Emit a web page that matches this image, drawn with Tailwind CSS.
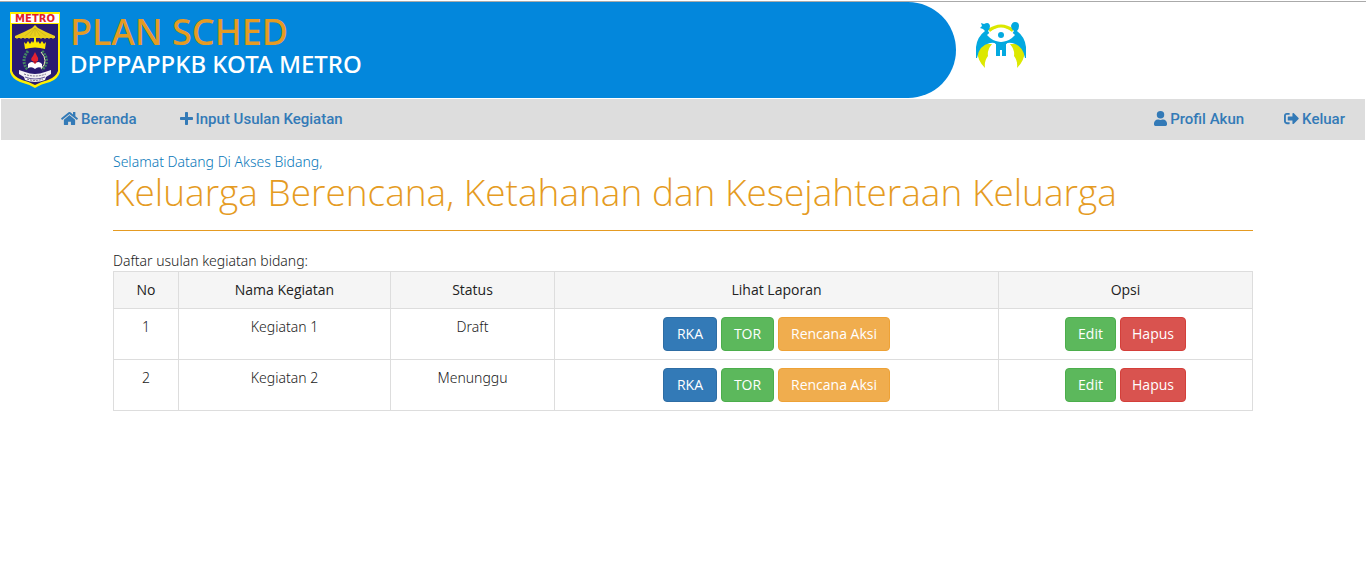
<!DOCTYPE html>
<html lang="id">
<head>
<meta charset="utf-8">
<meta name="viewport" content="width=device-width, initial-scale=1">
<title>Plan Sched - DPPPAPPKB Kota Metro</title>
<script src="https://cdn.jsdelivr.net/npm/@tailwindcss/browser@4"></script>
</head>
<body class="bg-white font-['Noto_Sans',sans-serif] text-sm leading-5 font-light text-[#222] pt-px">
<header class="flex border-t border-[#aaaaaa]">
  <div class="flex h-24 w-[70%] gap-2 rounded-r-[48px] bg-[#0387dc] pl-2">
    <svg class="mt-2 h-[80px] w-[54px] shrink-0" viewBox="0 0 54 80" role="img" aria-label="Lambang Kota Metro">
      <path d="M2 2H52V62Q50 69 42 72Q33 74 27 78Q20 74 12 72Q4 69 2 62Z" fill="#fff000"/>
      <path d="M4 14H50V61Q48 67 40 70Q32 72 27 75Q22 72 14 70Q6 67 4 61Z" fill="#291b70"/>
      <path d="M3 4H51V13H3Z" fill="#fff"/>
      <text x="27" y="12" text-anchor="middle" font-family="DejaVu Sans" font-size="10" font-weight="bold" fill="#e3202b">METRO</text>
      <path d="M27 15L30 18L38 22L47 26V28H7V26L16 22L24 18Z" fill="#e9cf1c"/>
      <path d="M27 18L17 26M27 18L22 26M27 18V26M27 18L32 26M27 18L38 26" stroke="#b59a20" stroke-width=".4"/>
      <path d="M9 27V29M13 27V29M17 27V29M21 27V29M33 27V29M37 27V29M41 27V29M45 27V29" stroke="#e9cf1c"/>
      <path d="M26 27H28V35H26Z" fill="#fff000"/>
      <path d="M16 32L18 34L20 31L22 34L24 31L25 33L27 29L29 33L30 31L32 34L34 31L36 34L38 32L37 39Q27 36 17 39Z" fill="#ffe900"/>
      <path d="M20 41Q12 51 20 60" fill="none" stroke="#438463" stroke-width="3" stroke-dasharray="2 1"/>
      <path d="M34 41Q43 51 34 60" fill="none" stroke="#438463" stroke-width="3" stroke-dasharray="2 1"/>
      <path d="M33 42Q41 51 33 59" fill="none" stroke="#e9dfb8"/>
      <path d="M27 42L29 46Q31 48 30 51H24Q22 49 25 46Z" fill="#e32231"/>
      <path d="M25 51H29L28 57H26Z" fill="#bd182a"/>
      <path d="M20 54Q24 50 27 54Q30 50 34 54V58Q30 56 27 59Q24 56 20 58Z" fill="#fff"/>
      <path d="M11 60L17 62Q27 66 37 62L43 60V64L38 67L37 70Q27 74 17 70L16 67L11 64Z" fill="#f3f1f4"/>
      <path d="M16 64Q27 68 38 64M19 69Q27 72 35 69" fill="none" stroke="#777188" stroke-dasharray="2 1"/>
      <path d="M17 67Q27 71 37 67" fill="none" stroke="#291b70" stroke-width=".7"/>
    </svg>
    <div class="pt-3 font-medium">
      <h1 class="text-[36px] leading-9 text-[#e59b22]">PLAN SCHED</h1>
      <p class="text-2xl leading-7 text-white">DPPPAPPKB KOTA METRO</p>
    </div>
  </div>
  <svg class="mt-5 ml-5 h-[50px] w-[50px]" viewBox="0 0 50 50" role="img" aria-label="Logo DPPPAPPKB">
    <path d="M12 7Q25-2 38 7L36 10Q25 1 14 10Z" fill="#dce800"/>
    <path d="M3 22H16Q11 28 12 34Q8 39 9 46Q-2 35 3 22ZM47 22H34Q39 28 38 34Q42 39 41 46Q52 35 47 22Z" fill="#dce800"/>
    <path d="M5 1L8 2Q13-1 14 4Q14 7 12 9Q17 18 25 20Q33 18 38 9Q35 7 35 4Q36 0 39 0Q43 0 43 4Q43 7 41 9Q49 15 50 25V36H49Q47 23 36 21Q32 20 30 22V34H26V28H24V34H20V22Q18 20 14 21Q3 23 1 36H0V25Q1 15 9 9L7 7L4 6L6 4Z" fill="#03a9e0"/>
    <path d="M11 13Q25-1 39 13Q33 20 25 20Q17 20 11 13Z" fill="#fff"/>
    <circle cx="25" cy="13" r="3" fill="#03a9e0"/>
    <path d="M18 19Q25 21 32 19L29 24V33L26 34V27H24V34L21 33V24Z" fill="#03a9e0"/>
  </svg>
</header>
<nav class="mx-px mt-px flex h-[41px] items-center justify-between bg-[#dddddd] pr-5 pb-0.5 pl-15 font-['Roboto',sans-serif] text-[15px] font-medium text-[#337ab7]">
  <div class="flex gap-[43px]">
    <a href="#" class="flex items-center gap-[3px]">
      <svg class="h-[15px] w-[17px]" viewBox="0 0 576 512" fill="currentColor" aria-hidden="true"><path d="M280 148L96 300v164c0 9 7 16 16 16h112c9 0 16-7 16-16v-96h96v96c0 9 7 16 16 16h112c9 0 16-7 16-16V300L296 148q-8-6-16 0ZM572 251l-84-69V44c0-7-5-12-12-12h-56c-7 0-12 5-12 12v72l-90-74q-30-24-60 0L4 251q-8 8-2 17l26 31q8 7 17 2L280 107q8-5 16 0l235 194q9 5 17-2l26-31q6-9-2-17Z"/></svg>Beranda</a>
    <a href="#" class="flex items-center gap-[3px]">
      <svg class="h-[13px] w-[13px]" viewBox="0 0 13 13" fill="currentColor" aria-hidden="true"><rect x="5" width="3" height="13" rx=".7"/><rect y="5" width="13" height="3" rx=".7"/></svg>Input Usulan Kegiatan</a>
  </div>
  <div class="flex gap-10">
    <a href="#" class="flex items-center gap-[3px]">
      <svg class="h-[15px] w-[13px]" viewBox="0 0 448 512" fill="currentColor" aria-hidden="true"><circle cx="224" cy="128" r="128"/><path d="M314 288h-17q-73 34-146 0h-17C60 288 0 348 0 422v42c0 27 21 48 48 48h352c27 0 48-21 48-48v-42c0-74-60-134-134-134Z"/></svg>Profil Akun</a>
    <a href="#" class="flex items-center gap-[3px]">
      <svg class="h-[15px] w-[15px]" viewBox="0 0 512 512" fill="currentColor" aria-hidden="true"><path d="M497 273L329 441c-15 15-41 4-41-17v-96H152c-13 0-24-11-24-24v-96c0-13 11-24 24-24h136V88c0-21 26-32 41-17l168 168q14 17 0 34ZM192 436v-40c0-7-5-12-12-12H96c-18 0-32-14-32-32V160c0-18 14-32 32-32h84c7 0 12-5 12-12V76c0-7-5-12-12-12H96C43 64 0 107 0 160v192c0 53 43 96 96 96h84c7 0 12-5 12-12Z"/></svg>Keluar</a>
  </div>
</nav>
<main class="mx-auto w-full max-w-[1140px] pt-3">
  <p class="text-[#0878b9]">Selamat Datang Di Akses Bidang,</p>
  <h2 class="font-['Open_Sans',sans-serif] text-[37px] leading-10 text-[#e59b22]">Keluarga Berencana, Ketahanan dan Kesejahteraan Keluarga</h2>
  <hr class="mt-[18px] mb-5 border-t border-[#e59b22]">
  <p id="daftar">Daftar usulan kegiatan bidang:</p>
  <table aria-labelledby="daftar" class="w-full table-fixed border-collapse text-center [&_td]:border [&_td]:border-[#dddddd] [&_td]:p-2 [&_td]:align-top [&_th]:border [&_th]:border-[#dddddd] [&_th]:p-2 [&_th]:font-['Open_Sans',sans-serif] [&_th]:font-medium">
    <colgroup><col class="w-[65px]"><col class="w-[212px]"><col class="w-[164px]"><col class="w-[444px]"><col></colgroup>
    <thead class="bg-[#f5f5f5]"><tr><th scope="col">No</th><th scope="col">Nama Kegiatan</th><th scope="col">Status</th><th scope="col">Lihat Laporan</th><th scope="col">Opsi</th></tr></thead>
    <tbody class="[&_button]:h-[34px] [&_button]:rounded [&_button]:border [&_button]:font-['Open_Sans',sans-serif] [&_button]:font-normal [&_button]:text-white">
      <tr><td>1</td><td>Kegiatan 1</td><td>Draft</td>
        <td><div class="flex justify-center gap-1"><button type="button" class="w-[54px] border-[#2e6da4] bg-[#337ab7]">RKA</button><button type="button" class="w-[53px] border-[#4cae4c] bg-[#5cb85c]">TOR</button><button type="button" class="w-[112px] border-[#eea236] bg-[#f0ad4e]">Rencana Aksi</button></div></td>
        <td><div class="flex justify-center gap-1"><button type="button" class="w-[51px] border-[#4cae4c] bg-[#5cb85c]">Edit</button><button type="button" class="w-[66px] border-[#d43f3a] bg-[#d9534f]">Hapus</button></div></td></tr>
      <tr><td>2</td><td>Kegiatan 2</td><td>Menunggu</td>
        <td><div class="flex justify-center gap-1"><button type="button" class="w-[54px] border-[#2e6da4] bg-[#337ab7]">RKA</button><button type="button" class="w-[53px] border-[#4cae4c] bg-[#5cb85c]">TOR</button><button type="button" class="w-[112px] border-[#eea236] bg-[#f0ad4e]">Rencana Aksi</button></div></td>
        <td><div class="flex justify-center gap-1"><button type="button" class="w-[51px] border-[#4cae4c] bg-[#5cb85c]">Edit</button><button type="button" class="w-[66px] border-[#d43f3a] bg-[#d9534f]">Hapus</button></div></td></tr>
    </tbody>
  </table>
</main>
</body>
</html>
